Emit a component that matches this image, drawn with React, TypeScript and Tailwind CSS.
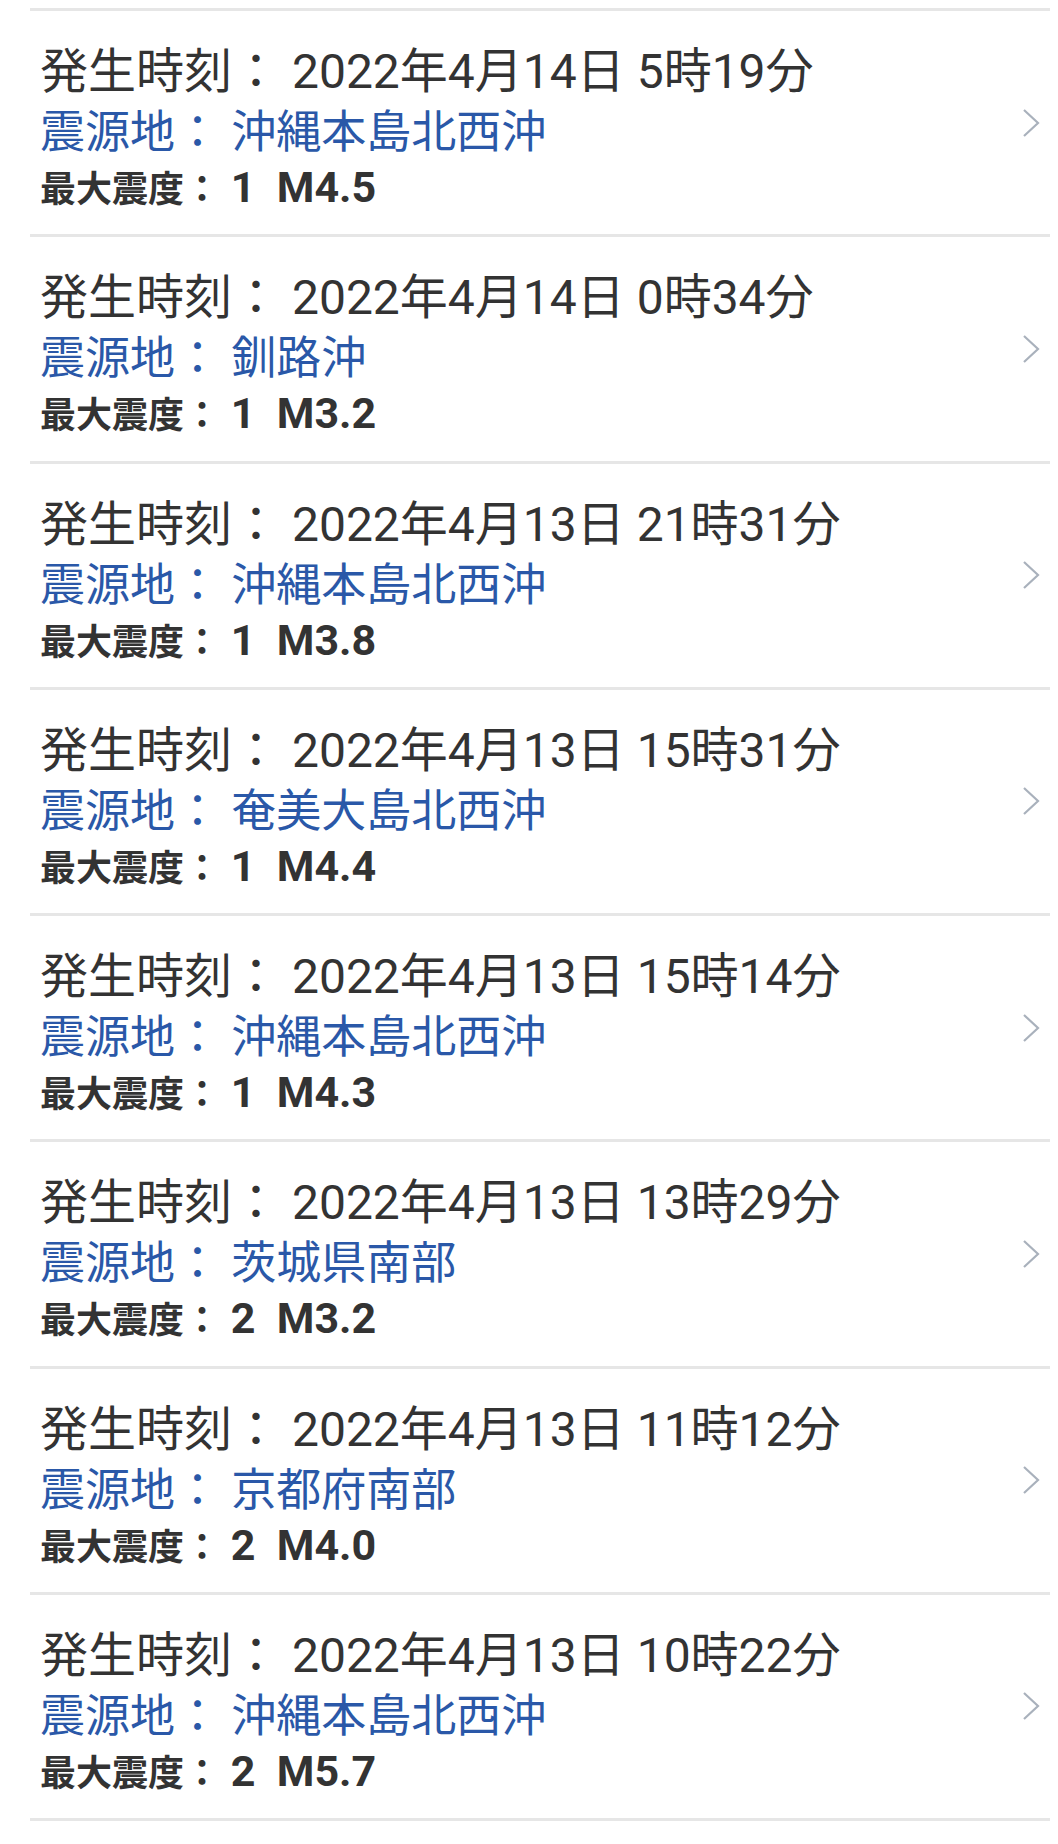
import React from 'react';

const quakes = [
  { time: '2022年4月14日 5時19分', place: '沖縄本島北西沖', shindo: '1', mag: 'M4.5' },
  { time: '2022年4月14日 0時34分', place: '釧路沖', shindo: '1', mag: 'M3.2' },
  { time: '2022年4月13日 21時31分', place: '沖縄本島北西沖', shindo: '1', mag: 'M3.8' },
  { time: '2022年4月13日 15時31分', place: '奄美大島北西沖', shindo: '1', mag: 'M4.4' },
  { time: '2022年4月13日 15時14分', place: '沖縄本島北西沖', shindo: '1', mag: 'M4.3' },
  { time: '2022年4月13日 13時29分', place: '茨城県南部', shindo: '2', mag: 'M3.2' },
  { time: '2022年4月13日 11時12分', place: '京都府南部', shindo: '2', mag: 'M4.0' },
  { time: '2022年4月13日 10時22分', place: '沖縄本島北西沖', shindo: '2', mag: 'M5.7' },
];

const Chevron = () => (
  <svg width="18" height="30" viewBox="0 0 18 30" fill="none">
    <polyline points="2,2 16,15 2,28" stroke="#a9b1bc" strokeWidth="2.2" />
  </svg>
);

export default function App() {
  return (
    <div
      className="w-[1058px] h-[1844px] bg-white overflow-hidden pt-[8px]"
      style={{ fontFamily: 'Roboto, "Noto Sans CJK JP", sans-serif' }}
    >
      <ul className="ml-[30px] mr-[8px] border-b-[3px] border-[#e6e6e6]">
        {quakes.map((q, i) => (
          <li
            key={i}
            className="h-[226.25px] border-t-[3px] border-[#e6e6e6] flex items-center justify-between pl-[10px] pr-[10px]"
          >
            {/* text block */}
            <div className="self-start whitespace-pre pt-[31px]">
              <div className="text-[48px] leading-[60px] text-[#333333]">
                発生時刻： {q.time}
              </div>
              <div className="text-[45px] leading-[61px] text-[#2a58a8]">
                震源地： {q.place}
              </div>
              <div className="text-[43px] leading-[48px] font-bold text-[#333333]">
                <span className="text-[36px]">最大震度：</span> {q.shindo}  {q.mag}
              </div>
            </div>
            <Chevron />
          </li>
        ))}
      </ul>
    </div>
  );
}
